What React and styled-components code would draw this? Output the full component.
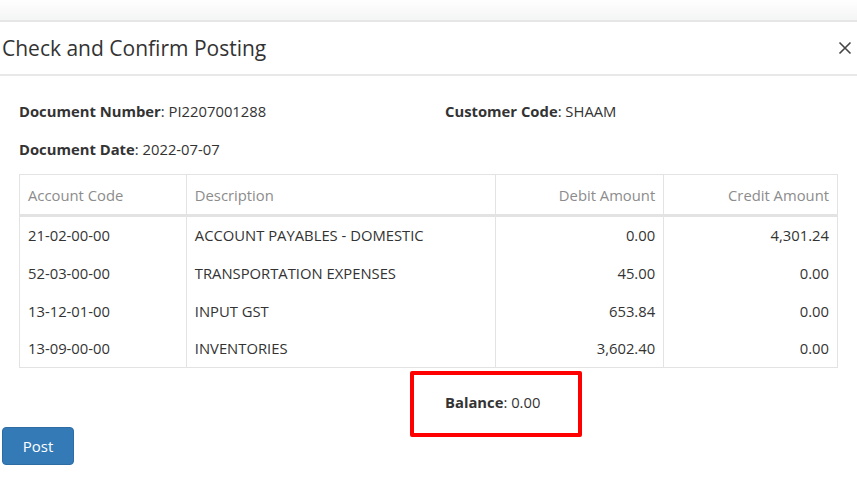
import React from "react";
import styled, { createGlobalStyle } from "styled-components";

const Global = createGlobalStyle`
  html, body { margin: 0; padding: 0; background: #fff; }
  body { font-family: "Open Sans", "Noto Sans", sans-serif; color: #333; }
  * { box-sizing: border-box; }
`;

const Page = styled.div`
  width: 857px;
  height: 501px;
  overflow: hidden;
  display: flex;
  flex-direction: column;
`;

const TopBand = styled.div`
  height: 22px;
  flex: none;
  background: linear-gradient(#ffffff, #f4f5f5);
  border-bottom: 2px solid #e6e6e6;
`;

const Header = styled.div`
  height: 54px;
  flex: none;
  display: flex;
  align-items: center;
  justify-content: space-between;
  padding: 0 4px 0 2px;
  border-bottom: 2px solid #e8e8e8;
`;

const Title = styled.h4`
  margin: 0;
  font-size: 21px;
  font-weight: 400;
  color: #333;
`;

const Close = styled.button`
  border: 0;
  background: none;
  padding: 0;
  width: 16px;
  height: 16px;
  display: flex;
  align-items: center;
  justify-content: center;
  cursor: pointer;
`;

const Body = styled.div`
  padding: 25px 19px 0 19px;
`;

const InfoGrid = styled.div`
  display: grid;
  grid-template-columns: 426px 1fr;
  row-gap: 17px;
  font-size: 14.8px;
  line-height: 21px;
`;

const Field = styled.div`
  color: #333;
  b { font-weight: 700; }
`;

const Table = styled.table`
  margin-top: 14px;
  width: 819px;
  border-collapse: collapse;
  font-size: 14.8px;
  border: 1px solid #e3e3e3;
`;

const Th = styled.th`
  height: 41px;
  padding: 0 8px;
  font-weight: 400;
  color: #8c8c8c;
  text-align: ${(p) => (p.$right ? "right" : "left")};
  border: 1px solid #e3e3e3;
  border-bottom: 3px solid #e3e3e3;
  width: ${(p) => p.$w}px;
`;

const Td = styled.td`
  height: 38px;
  padding: 0 8px;
  color: #333;
  text-align: ${(p) => (p.$right ? "right" : "left")};
  border-left: 1px solid #e3e3e3;
  border-right: 1px solid #e3e3e3;
`;

const BalanceRow = styled.div`
  display: flex;
  margin-top: 3px;
  padding-left: 410px;
`;

const BalanceBox = styled.div`
  width: 172px;
  height: 66px;
  border: 4px solid #ff0000;
  border-radius: 2px;
  padding: 17px 0 0 31px;
  font-size: 14.8px;
  b { font-weight: 700; }
`;

const Footer = styled.div`
  padding: 0 0 0 2px;
  margin-top: -10px;
`;

const PostButton = styled.button`
  width: 72px;
  height: 38px;
  background: #337ab7;
  color: #fff;
  border: 1px solid #2e6da4;
  border-radius: 4px;
  font-family: inherit;
  font-size: 15px;
  cursor: pointer;
`;

const rows = [
  ["21-02-00-00", "ACCOUNT PAYABLES - DOMESTIC", "0.00", "4,301.24"],
  ["52-03-00-00", "TRANSPORTATION EXPENSES", "45.00", "0.00"],
  ["13-12-01-00", "INPUT GST", "653.84", "0.00"],
  ["13-09-00-00", "INVENTORIES", "3,602.40", "0.00"],
];

export default function App() {
  return (
    <Page>
      <Global />
      <TopBand />
      <Header>
        <Title>Check and Confirm Posting</Title>
        <Close aria-label="Close">
          <svg width="14" height="14" viewBox="0 0 14 14">
            <path d="M1.5 1.5 L12.5 12.5 M12.5 1.5 L1.5 12.5" stroke="#444" strokeWidth="1.6" />
          </svg>
        </Close>
      </Header>
      <Body>
        <InfoGrid>
          <Field><b>Document Number</b>: PI2207001288</Field>
          <Field><b>Customer Code</b>: SHAAM</Field>
          <Field><b>Document Date</b>: 2022-07-07</Field>
        </InfoGrid>
        <Table>
          <thead>
            <tr>
              <Th $w={167}>Account Code</Th>
              <Th $w={310}>Description</Th>
              <Th $w={168} $right>Debit Amount</Th>
              <Th $w={174} $right>Credit Amount</Th>
            </tr>
          </thead>
          <tbody>
            {rows.map((r) => (
              <tr key={r[0]}>
                <Td>{r[0]}</Td>
                <Td>{r[1]}</Td>
                <Td $right>{r[2]}</Td>
                <Td $right>{r[3]}</Td>
              </tr>
            ))}
          </tbody>
        </Table>
      </Body>
      <BalanceRow>
        <BalanceBox><b>Balance</b>: 0.00</BalanceBox>
      </BalanceRow>
      <Footer>
        <PostButton>Post</PostButton>
      </Footer>
    </Page>
  );
}
